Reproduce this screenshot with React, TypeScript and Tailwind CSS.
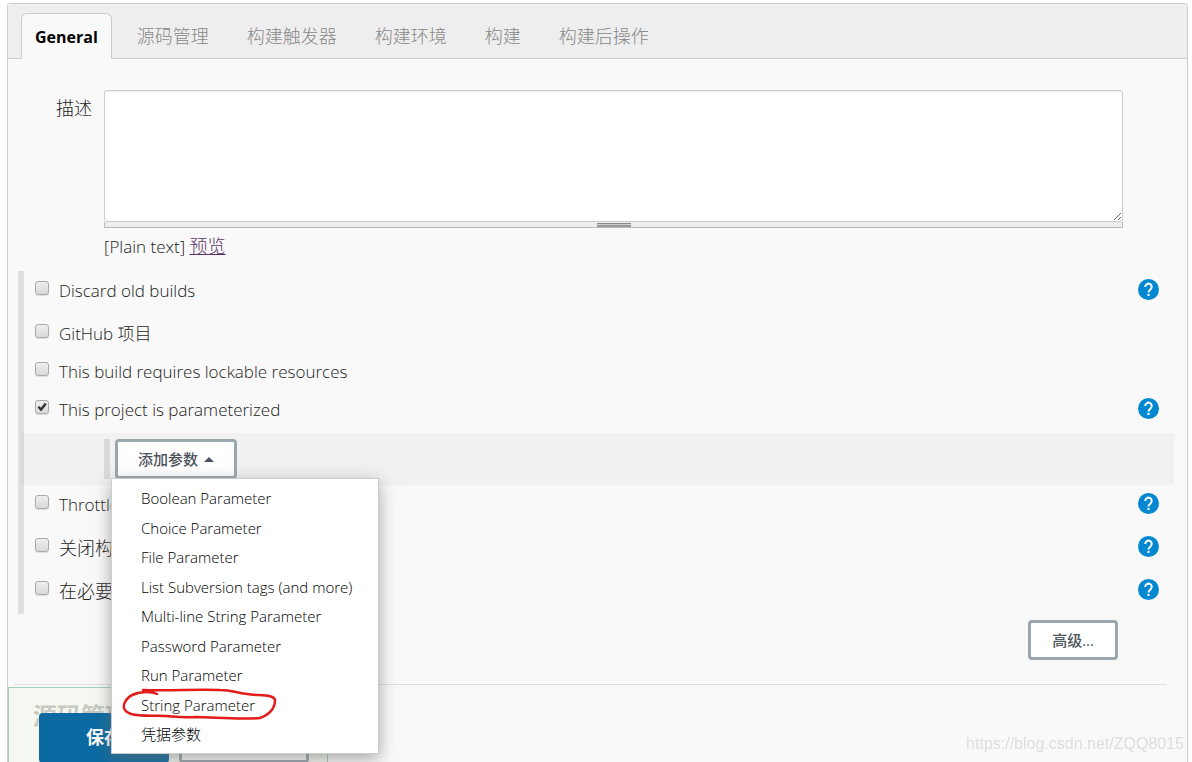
import React, { useState } from "react";

interface JobOption {
  id: string;
  label: string;
  help: boolean;
  rowClass: string;
}

const TABS = ["General", "源码管理", "构建触发器", "构建环境", "构建", "构建后操作"];

const OPTIONS: JobOption[] = [
  { id: "discard", label: "Discard old builds", help: true, rowClass: "h-[43px]" },
  { id: "github", label: "GitHub 项目", help: false, rowClass: "h-[38px]" },
  { id: "lockable", label: "This build requires lockable resources", help: false, rowClass: "h-[38px]" },
  { id: "parameterized", label: "This project is parameterized", help: true, rowClass: "h-[43px]" },
];

const MORE_OPTIONS: JobOption[] = [
  { id: "throttle", label: "Throttle", help: true, rowClass: "h-[43px]" },
  { id: "disable", label: "关闭构建", help: true, rowClass: "h-[43px] text-lg" },
  { id: "concurrent", label: "在必要", help: true, rowClass: "h-[43px] text-lg" },
];

const PARAMETERS = [
  "Boolean Parameter",
  "Choice Parameter",
  "File Parameter",
  "List Subversion tags (and more)",
  "Multi-line String Parameter",
  "Password Parameter",
  "Run Parameter",
  "String Parameter",
  "凭据参数",
];

function HelpButton({ label }: { label: string }) {
  return (
    <button type="button" aria-label={`Help: ${label}`} className="mr-[15px] h-[21px] w-[21px] shrink-0">
      <svg viewBox="0 0 24 24" className="h-full w-full">
        <circle cx="12" cy="12" r="12" fill="#0288d1" />
        <path
          d="M8.3 9.2a3.7 3.7 0 1 1 6 2.7c-1.5 1.2-2.3 1.8-2.3 3.6"
          fill="none"
          stroke="#fff"
          strokeWidth="2.3"
        />
        <rect x="10.8" y="17" width="2.4" height="2.4" fill="#fff" />
      </svg>
    </button>
  );
}

function OptionRow({
  option,
  checked,
  onToggle,
}: {
  option: JobOption;
  checked: boolean;
  onToggle: (id: string) => void;
}) {
  return (
    <div className={`flex items-start pt-2 ${option.rowClass}`}>
      <div className="relative mt-[2px] h-[14px] w-[14px] shrink-0">
        <input
          id={option.id}
          type="checkbox"
          checked={checked}
          onChange={() => onToggle(option.id)}
          className="block h-[14px] w-[14px] appearance-none rounded-[3px] border border-[#aaa] bg-linear-to-b from-[#eee] to-[#d9d9d9] shadow-[0_1px_1px_#ddd]"
        />
        {checked && (
          <svg viewBox="0 0 14 14" className="pointer-events-none absolute inset-0 h-full w-full">
            <path d="M3.4 6.8 6 9.6 10.8 3.4" fill="none" stroke="#333" strokeWidth="2.4" />
          </svg>
        )}
      </div>
      <label htmlFor={option.id} className="ml-[10px] flex-1 leading-6">
        {option.label}
      </label>
      {option.help && <HelpButton label={option.label} />}
    </div>
  );
}

export default function App() {
  const [activeTab, setActiveTab] = useState("General");
  const [checked, setChecked] = useState<string[]>(["parameterized"]);
  const [menuOpen, setMenuOpen] = useState(true);
  const [description, setDescription] = useState("");

  const toggle = (id: string) =>
    setChecked((prev) => (prev.includes(id) ? prev.filter((x) => x !== id) : [...prev, id]));

  return (
    <div className="h-screen overflow-hidden bg-white pt-[3px] pr-1 pl-[7px] font-['Open_Sans','Noto_Sans_CJK_SC',sans-serif] text-[17px] font-light text-[#222]">
      <main className="flex min-h-full flex-col rounded-t-[3px] border border-[#ccc] bg-[#f9f9f9]">
        {/* Section tabs */}
        <nav className="flex h-[55px] items-end gap-3 border-b border-[#ccc] bg-[#eee] pl-[13px] text-lg">
          {TABS.map((tab) => (
            <button
              key={tab}
              type="button"
              onClick={() => setActiveTab(tab)}
              className={
                tab === activeTab
                  ? "-mb-px h-[46px] rounded-t-md border border-b-0 border-[#ccc] bg-[#f9f9f9] px-[13px] text-base font-bold text-black"
                  : "h-[45px] px-[13px] text-[#888]"
              }
            >
              {tab}
            </button>
          ))}
        </nav>

        {/* Description */}
        <div className="flex pt-[31px] pr-16">
          <label htmlFor="description" className="w-24 shrink-0 pt-1 pr-3 text-right text-lg">
            描述
          </label>
          <div className="flex-1">
            <textarea
              id="description"
              value={description}
              onChange={(e) => setDescription(e.target.value)}
              className="block h-[132px] w-full resize rounded-[3px] border border-[#ccc] bg-white p-2 shadow-[inset_0_1px_1px_#eee]"
            />
            <div className="flex h-[6px] justify-center border border-t-0 border-[#bbb] bg-[#eee]">
              <div className="mt-px h-1 w-[34px] border-t border-b-2 border-t-[#888] border-b-[#999] bg-[#ccc]" />
            </div>
            <p className="pt-[6px] leading-6">
              [Plain text]{" "}
              <a href="#preview" className="text-lg leading-6 text-[#5c3566] underline">
                预览
              </a>
            </p>
          </div>
        </div>

        {/* Job options */}
        <div className="mt-3 mr-[13px] ml-[10px] border-l-[6px] border-[#e0e0e0]">
          <div className="pl-[11px]">
            {OPTIONS.map((option) => (
              <OptionRow
                key={option.id}
                option={option}
                checked={checked.includes(option.id)}
                onToggle={toggle}
              />
            ))}
          </div>

          <div className="-ml-[3px] h-[52px] bg-black/3 py-[6px] pl-[83px]">
            <div className="relative flex h-10 border-l-[6px] border-[#d9d9d9] pl-[5px]">
              <button
                type="button"
                aria-expanded={menuOpen}
                onClick={() => setMenuOpen(!menuOpen)}
                className="flex h-10 items-center gap-[6px] rounded-[4px] border-[3px] border-[#9aa7af] bg-white px-5 text-[15px] font-medium text-[#4d545d]"
              >
                添加参数
                <svg viewBox="0 0 10 5" className="h-[5px] w-[10px]">
                  <path d="M0 5 5 0 10 5z" fill="currentColor" />
                </svg>
              </button>

              {menuOpen && (
                <ul className="absolute top-[39px] left-px z-20 w-[268px] border border-[#ccc] bg-white pt-[5px] pb-1 text-[15px] text-black shadow-[0_5px_16px_rgba(110,110,110,0.6)]">
                  {PARAMETERS.map((name, i) => (
                    <li key={name} className={i % 2 ? "relative h-[30px]" : "relative h-[29px]"}>
                      <button type="button" className="h-full w-full pl-[29px] text-left">
                        {name}
                      </button>
                      {name === "String Parameter" && (
                        <svg
                          viewBox="0 0 156 34"
                          className="pointer-events-none absolute -top-0.5 left-[10px] h-[34px] w-[156px]"
                          fill="none"
                          stroke="#e21b1b"
                          strokeWidth="2.5"
                          strokeLinecap="round"
                          strokeLinejoin="round"
                        >
                          <path d="M35 6C31 4 27 4 24 4C14 4 6 8 3 14C0 20 3 24 9 26C20 29 34 27 44 28C56 29 60 30 74 29C92 29 115 32 138 30C146 27 153 21 153 12C152 6 138 8 125 6C112 4 109 2 98 2C76 1 48 3 21 2" />
                        </svg>
                      )}
                    </li>
                  ))}
                </ul>
              )}
            </div>
          </div>

          <div className="pl-[11px]">
            {MORE_OPTIONS.map((option) => (
              <OptionRow
                key={option.id}
                option={option}
                checked={checked.includes(option.id)}
                onToggle={toggle}
              />
            ))}
          </div>
        </div>

        <div className="mt-[6px] flex justify-end pr-[69px]">
          <button
            type="button"
            className="h-10 rounded-[4px] border-[3px] border-[#9aa7af] bg-white px-[21px] text-[15px] font-medium text-[#4d545d]"
          >
            高级...
          </button>
        </div>

        <hr className="mt-6 mr-5 ml-[6px] border-[#ddd]" />

        {/* Next section, running under the sticky save bar */}
        <section className="relative mt-[2px] h-[90px] w-80 border border-[#a3cfb4] bg-[#f5f8f1] pt-3 pl-6">
          <h2 className="text-2xl font-bold text-[#c8cac2]">源码管理</h2>
          <div className="absolute top-[25px] left-[30px] flex gap-[10px] text-lg font-bold">
            <button type="button" className="h-[50px] w-[130px] rounded-[4px] bg-[#0b6aa2] pb-[2px] text-white">
              保存
            </button>
            <button
              type="button"
              className="h-[50px] w-[130px] rounded-[4px] border-[3px] border-[#9aa7af] bg-white text-[#4d545d]"
            >
              应用
            </button>
          </div>
        </section>
      </main>

      <p className="fixed right-2 bottom-1.5 font-['Liberation_Sans',sans-serif] text-base font-normal text-[#ddd]">
        https://blog.csdn.net/ZQQ8015
      </p>
    </div>
  );
}
